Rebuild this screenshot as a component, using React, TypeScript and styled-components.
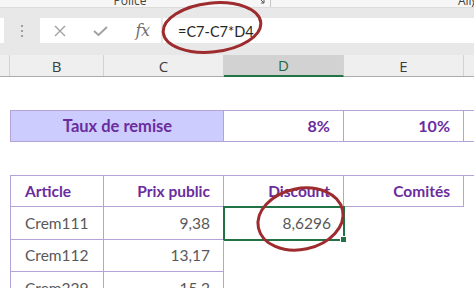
import React from "react";
import styled, { createGlobalStyle } from "styled-components";

const Global = createGlobalStyle`
  html, body { margin: 0; padding: 0; background: #ffffff; }
  body { width: 474px; height: 288px; overflow: hidden; font-family: Lato, "Liberation Sans", sans-serif; }
`;

const Page = styled.div`
  position: relative;
  width: 474px;
  height: 288px;
  overflow: hidden;
  background: #ffffff;
`;

const Ribbon = styled.div`
  box-sizing: border-box;
  height: 8px;
  display: flex;
  background: #f6f6f6;
  border-bottom: 1px solid #dcdcdc;
  overflow: hidden;
`;

const RibbonGroup = styled.div<{ $w?: number; $sep?: boolean }>`
  position: relative;
  display: flex;
  align-items: flex-start;
  width: ${(p) => (p.$w ? `${p.$w}px` : "auto")};
  flex: ${(p) => (p.$w ? "none" : "1")};
  border-right: ${(p) => (p.$sep ? "1px solid #c6c6c6" : "none")};
`;

const GroupLabel = styled.span<{ $center?: boolean; $pad?: number }>`
  flex: 1;
  margin-top: -5px;
  padding-left: ${(p) => p.$pad ?? 0}px;
  padding-right: ${(p) => (p.$center ? 10 : 0)}px;
  text-align: ${(p) => (p.$center ? "center" : "left")};
  font-family: "Open Sans", "Liberation Sans", sans-serif;
  font-size: 12px;
  line-height: 12px;
  color: #444444;
  white-space: nowrap;
`;

const Launcher = styled.svg`
  position: absolute;
  right: 5px;
  top: -2px;
`;

const FormulaArea = styled.div`
  display: flex;
  height: 25px;
  padding: 10px 0 12px 0;
  background: #e8e8e8;
`;

const NameBox = styled.div`
  width: 4px;
  background: #ffffff;
`;

const Grip = styled.div`
  width: 36px;
  display: flex;
  align-items: center;
  justify-content: center;
`;

const ActionBox = styled.div`
  width: 121px;
  display: flex;
  align-items: center;
  background: #ffffff;
`;

const ActionSlot = styled.div<{ $w: number }>`
  width: ${(p) => p.$w}px;
  display: flex;
  align-items: center;
  justify-content: center;
`;

const FxGlyph = styled.span`
  font-family: "DejaVu Serif", "Liberation Serif", serif;
  font-style: italic;
  font-size: 16px;
  color: #707070;
  letter-spacing: -0.5px;
  padding-left: 4px;
`;

const FormulaInput = styled.div`
  flex: 1;
  margin-left: 2px;
  display: flex;
  align-items: center;
  padding-left: 15px;
  padding-top: 1px;
  background: #ffffff;
  font-family: Lato, "Liberation Sans", sans-serif;
  font-size: 14.5px;
  color: #262626;
`;

const cols = "10px 94px 120px 120px 120px 1fr";

const HeaderRow = styled.div`
  box-sizing: border-box;
  display: grid;
  grid-template-columns: ${cols};
  height: 22px;
  background: #efefef;
  border-bottom: 1px solid #ababab;
`;

const ColHead = styled.div<{ $active?: boolean; $last?: boolean }>`
  box-sizing: border-box;
  display: flex;
  align-items: center;
  justify-content: center;
  font-family: "Open Sans", "Liberation Sans", sans-serif;
  font-size: 15px;
  color: ${(p) => (p.$active ? "#1e6b40" : "#3c3c3c")};
  background: ${(p) => (p.$active ? "#d2d2d2" : "transparent")};
  border-right: ${(p) => (p.$last ? "none" : "1px solid #d3d3d3")};
  border-bottom: ${(p) => (p.$active ? "2px solid #217346" : "none")};
  margin-bottom: ${(p) => (p.$active ? "-1px" : "0")};
`;

const Sheet = styled.div`
  display: grid;
  grid-template-columns: ${cols};
  grid-auto-rows: 32.5px;
`;

const line = "1px solid #b3a3d9";

const Cell = styled.div<{
  $edges?: string;
  $align?: "left" | "right" | "center";
  $head?: boolean;
  $size?: number;
  $fill?: string;
  $span?: number;
  $selected?: boolean;
}>`
  position: relative;
  box-sizing: border-box;
  display: flex;
  align-items: center;
  justify-content: ${(p) =>
    p.$align === "right" ? "flex-end" : p.$align === "center" ? "center" : "flex-start"};
  padding: 0 13px 0 14px;
  grid-column: ${(p) => (p.$span ? `span ${p.$span}` : "auto")};
  background: ${(p) => p.$fill ?? "transparent"};
  border-top: ${(p) => (p.$edges?.includes("t") ? line : "none")};
  border-bottom: ${(p) => (p.$edges?.includes("b") ? line : "none")};
  border-left: ${(p) => (p.$edges?.includes("l") ? line : "none")};
  border-right: ${(p) => (p.$edges?.includes("r") ? line : "none")};
  font-family: Lato, "Liberation Sans", sans-serif;
  font-size: ${(p) => p.$size ?? 15.5}px;
  font-weight: ${(p) => (p.$head ? 700 : 400)};
  color: ${(p) => (p.$head ? "#6b2c9e" : "#595959")};
  white-space: nowrap;

  ${(p) =>
    p.$selected
      ? `
    &::after {
      content: "";
      position: absolute;
      left: -1px;
      top: -1px;
      right: -1px;
      bottom: -1px;
      border: 2px solid #217346;
    }
    &::before {
      content: "";
      position: absolute;
      right: -3px;
      bottom: -3px;
      width: 5px;
      height: 5px;
      background: #217346;
      border: 1px solid #ffffff;
      z-index: 1;
    }
  `
      : ""}
`;

const Blank = styled.div`
  grid-column: span 6;
`;

const Annotations = styled.svg`
  position: absolute;
  left: 0;
  top: 0;
  pointer-events: none;
`;

export default function App() {
  return (
    <Page>
      <Global />
      <Ribbon>
        <RibbonGroup $w={270} $sep>
          <GroupLabel $center>Police</GroupLabel>
          <Launcher width="6" height="6" viewBox="0 0 6 6">
            <path d="M1 1 L5 5 M5 2 V5 H2" stroke="#555" strokeWidth="1" fill="none" />
          </Launcher>
        </RibbonGroup>
        <RibbonGroup>
          <GroupLabel $pad={187}>Alignement</GroupLabel>
        </RibbonGroup>
      </Ribbon>

      <FormulaArea>
        <NameBox />
        <Grip>
          <svg width="4" height="14" viewBox="0 0 4 14">
            <circle cx="2" cy="2" r="1.1" fill="#8c8c8c" />
            <circle cx="2" cy="7" r="1.1" fill="#8c8c8c" />
            <circle cx="2" cy="12" r="1.1" fill="#8c8c8c" />
          </svg>
        </Grip>
        <ActionBox>
          <ActionSlot $w={40}>
            <svg width="12" height="12" viewBox="0 0 12 12">
              <path d="M1 1 L11 11 M11 1 L1 11" stroke="#a3a3a3" strokeWidth="1.4" fill="none" />
            </svg>
          </ActionSlot>
          <ActionSlot $w={40}>
            <svg width="15" height="10" viewBox="0 0 15 10">
              <path d="M1 5 L5.5 9 L14 1" stroke="#a3a3a3" strokeWidth="2" fill="none" />
            </svg>
          </ActionSlot>
          <ActionSlot $w={41}>
            <FxGlyph>fx</FxGlyph>
          </ActionSlot>
        </ActionBox>
        <FormulaInput>=C7-C7*D4</FormulaInput>
      </FormulaArea>

      <HeaderRow>
        <ColHead />
        <ColHead>B</ColHead>
        <ColHead>C</ColHead>
        <ColHead $active>D</ColHead>
        <ColHead>E</ColHead>
        <ColHead $last />
      </HeaderRow>

      <Sheet>
        <Blank />

        <div />
        <Cell $span={2} $edges="tblr" $align="center" $head $size={16.5} $fill="#ccccff">
          Taux de remise
        </Cell>
        <Cell $edges="tbr" $align="right" $head $size={16}>
          8%
        </Cell>
        <Cell $edges="tbr" $align="right" $head $size={16}>
          10%
        </Cell>
        <Cell $edges="tb" />

        <Blank />

        <div />
        <Cell $edges="tblr" $head>
          Article
        </Cell>
        <Cell $edges="tbr" $align="right" $head>
          Prix public
        </Cell>
        <Cell $edges="tbr" $align="right" $head>
          Discount
        </Cell>
        <Cell $edges="tbr" $align="right" $head>
          Comités
        </Cell>
        <Cell $edges="t" />

        <div />
        <Cell $edges="blr">Crem111</Cell>
        <Cell $edges="br" $align="right">
          9,38
        </Cell>
        <Cell $align="right" $selected>
          8,6296
        </Cell>
        <div />
        <div />

        <div />
        <Cell $edges="blr">Crem112</Cell>
        <Cell $edges="br" $align="right">
          13,17
        </Cell>
        <div />
        <div />
        <div />

        <div />
        <Cell $edges="lr">Crem229</Cell>
        <Cell $edges="r" $align="right">
          15,2
        </Cell>
        <div />
        <div />
        <div />
      </Sheet>

      <Annotations width="474" height="288" viewBox="0 0 474 288">
        <ellipse
          cx="212"
          cy="27.5"
          rx="49"
          ry="24.5"
          transform="rotate(-6 212 27.5)"
          fill="none"
          stroke="#9e2b2d"
          strokeWidth="3"
        />
        <ellipse
          cx="300.5"
          cy="219"
          rx="43"
          ry="30.5"
          transform="rotate(-12 300.5 219)"
          fill="none"
          stroke="#9e2b2d"
          strokeWidth="3"
        />
      </Annotations>
    </Page>
  );
}
